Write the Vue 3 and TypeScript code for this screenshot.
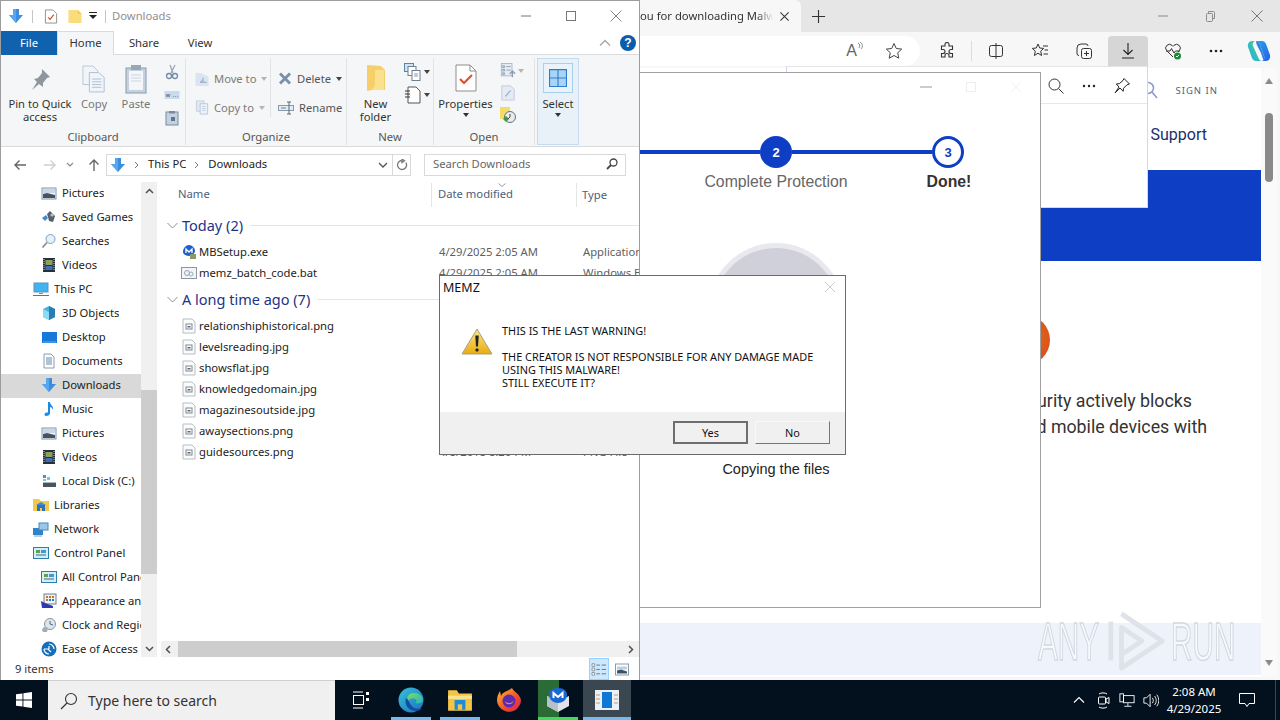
<script setup lang="ts">
const ic: Record<string, string> = {
  down: '<path d="M5 1h6v6h4l-7 8-7-8h4z" fill="#3a8ee0"/><path d="M5 1h3v14l-7-8h4z" fill="#5aa6ec"/>',
  pics: '<rect x="1" y="3" width="14" height="11" fill="#f4f6f8" stroke="#7e93ab"/><path d="M2 4h12v4H2z" fill="#c6d8ea"/><path d="M2 13V9l4-1 8 2v3z" fill="#48525e"/>',
  games: '<path d="M1 9l4-3 2 3-3 3z" fill="#4a87c8"/><path d="M6 5l3-3 5 5-2 6-4-1-1-4z" fill="#55606c"/><circle cx="11" cy="6" r="1.6" fill="#b9c4cf"/>',
  search: '<circle cx="9.500" cy="6" r="4.500" fill="#e4f1fa" stroke="#7ea2bf"/><path d="M6 9.500l-4.500 5" stroke="#8a8f95" stroke-width="1.800"/>',
  video: '<rect x="2" y="1" width="12" height="14" fill="#26303c"/><rect x="4.500" y="3" width="7" height="5" fill="#8fa05a"/><rect x="4.500" y="9" width="7" height="4" fill="#3f6fb0"/><path d="M3 2v12M13 2v12" stroke="#c8d0d8" stroke-dasharray="1 1"/>',
  pc: '<rect x="1" y="2" width="14" height="9" fill="#3fb4ee" stroke="#5b93bd"/><path d="M6 12h4v1H6z" fill="#77909f"/><path d="M0 14h16v1H0z" fill="#3e7fb0"/>',
  obj: '<path d="M8 1l6 3v8l-6 3-6-3V4z" fill="#45b4e0"/><path d="M8 1l6 3v8l-6 3z" fill="#2a7cb5"/><path d="M2 4l6 3v8l-6-3z" fill="#8bdbf2"/>',
  desk: '<rect x="1" y="3" width="15" height="11" fill="#1678d8"/><path d="M2 13h13" stroke="#65b4f2"/>',
  docs: '<path d="M3 1h7l3 3v11H3z" fill="#fff" stroke="#8b9aa8"/><path d="M5 5h6M5 7h6M5 9h6M5 11h6" stroke="#5d87ad"/>',
  music: '<path d="M7 1h2c0 3 4 4 3 8-.5-2-2-3-3-3v6c0 2-2 3-4 3-2-.3-2-3 .5-3.500.6-.1 1.500 0 1.500.3z" fill="#1d8ae0"/>',
  disk: '<rect x="2" y="9" width="13" height="5" fill="#4b5560"/><path d="M2 9h13v1H2z" fill="#aeb8c2"/><rect x="2" y="2" width="3" height="3" fill="#2aa0e0"/><rect x="6" y="4" width="3" height="3" fill="#75c5ef"/><rect x="2" y="6" width="3" height="2" fill="#75c5ef"/>',
  libs: '<path d="M0 2h6l2 2h8v10H0z" fill="#f2c84c"/><path d="M4 8h8v6H4z" fill="#2f73bd"/><path d="M3 8l5-3 5 3z" fill="#3f8cd8"/><rect x="7" y="11" width="2" height="3" fill="#f2c84c"/>',
  net: '<rect x="0" y="7" width="10" height="7" fill="#2f83c8"/><rect x="6" y="2" width="9" height="7" fill="#9ac8ea" stroke="#4687b8"/><path d="M1 15h8" stroke="#7aa0bd"/>',
  cp: '<rect x="0.500" y="2.500" width="15" height="11" fill="#d5edf7" stroke="#2f7fae"/><rect x="3" y="5" width="4" height="3" fill="#5aa44f"/><rect x="8" y="5" width="5" height="3" fill="#3f9acb"/><rect x="3" y="9" width="10" height="2" fill="#90a8bb"/>',
  app: '<rect x="3" y="1" width="12" height="10" fill="#eef0f2" stroke="#6d7f92"/><path d="M5 3h2v2H5zM8 3h2v2H8zM11 3h2v2h-2zM5 6h2v2H5z" fill="#c2772e"/><path d="M8 6h2v2H8zM11 6h2v2h-2z" fill="#2f7fc0"/><path d="M0 8l4 2 8 3v2H1z" fill="#2e38b0"/>',
  clock: '<circle cx="9" cy="7" r="5.500" fill="#dfe6ea" stroke="#8797a3"/><path d="M9 4v3l3 1" stroke="#3f6f98" fill="none"/><path d="M1 13c1-4 4-3 6-2l-1 4H2z" fill="#a6adb3"/>',
  ease: '<circle cx="8" cy="8" r="7.500" fill="#176fb8"/><path d="M8 3a5 5 0 0 1 5 5M3 8a5 5 0 0 0 5 5M3 8h4l3 3M8 5v3" stroke="#fff" fill="none" stroke-width="1.200"/>',
  exe: '<path d="M2 8c0-4 3-7 6-7s6 3 6 6c0 2-3 5-6 5S2 10 2 8z" fill="#1d5fd0"/><path d="M5 9V5l3 3 3-3v4" stroke="#fff" fill="none" stroke-width="1.300"/><rect x="9" y="10" width="6" height="5" fill="#8b9a62"/>',
  bat: '<rect x="0.500" y="2.500" width="15" height="11" fill="#f3f4f5" stroke="#8b97a3"/><circle cx="6" cy="8" r="2.500" fill="none" stroke="#8fa4b8"/><circle cx="10" cy="9" r="2" fill="none" stroke="#a0adb9"/>',
  img: '<path d="M2 1h9l3 3v11H2z" fill="#fbfbfb" stroke="#b8bec4"/><rect x="5" y="6" width="6" height="5" fill="#fff" stroke="#7b8793"/><rect x="6.500" y="8" width="3" height="1.500" fill="#5b6672"/>',
}

interface NavRow { label: string; icon: string; top?: boolean; sel?: boolean }
const navRows: NavRow[] = [
  { label: 'Pictures', icon: 'pics' },
  { label: 'Saved Games', icon: 'games' },
  { label: 'Searches', icon: 'search' },
  { label: 'Videos', icon: 'video' },
  { label: 'This PC', icon: 'pc', top: true },
  { label: '3D Objects', icon: 'obj' },
  { label: 'Desktop', icon: 'desk' },
  { label: 'Documents', icon: 'docs' },
  { label: 'Downloads', icon: 'down', sel: true },
  { label: 'Music', icon: 'music' },
  { label: 'Pictures', icon: 'pics' },
  { label: 'Videos', icon: 'video' },
  { label: 'Local Disk (C:)', icon: 'disk' },
  { label: 'Libraries', icon: 'libs', top: true },
  { label: 'Network', icon: 'net', top: true },
  { label: 'Control Panel', icon: 'cp', top: true },
  { label: 'All Control Panel Items', icon: 'cp' },
  { label: 'Appearance and Personalization', icon: 'app' },
  { label: 'Clock and Region', icon: 'clock' },
  { label: 'Ease of Access', icon: 'ease' },
]

interface FileRow { name: string; date: string; type: string; icon: string }
const today: FileRow[] = [
  { name: 'MBSetup.exe', date: '4/29/2025 2:05 AM', type: 'Application', icon: 'exe' },
  { name: 'memz_batch_code.bat', date: '4/29/2025 2:05 AM', type: 'Windows Batch File', icon: 'bat' },
]
const old: FileRow[] = [
  { name: 'relationshiphistorical.png', date: '', type: '', icon: 'img' },
  { name: 'levelsreading.jpg', date: '', type: '', icon: 'img' },
  { name: 'showsflat.jpg', date: '', type: '', icon: 'img' },
  { name: 'knowledgedomain.jpg', date: '', type: '', icon: 'img' },
  { name: 'magazinesoutside.jpg', date: '', type: '', icon: 'img' },
  { name: 'awaysections.png', date: '', type: '', icon: 'img' },
  { name: 'guidesources.png', date: '4/8/2018 8:20 PM', type: 'PNG File', icon: 'img' },
]
const groups = [
  { title: 'Today (2)', files: today },
  { title: 'A long time ago (7)', files: old },
]
</script>

<template>
  <div class="desktop">
    <!-- browser -->
    <section class="browser">
      <div class="tabstrip">
        <div class="tab">
          <span class="tabtext">ou for downloading Malw</span>
          <svg class="i12" viewBox="0 0 12 12"><path d="M1.500 1.500l9 9M10.500 1.500l-9 9" stroke="#333" fill="none" stroke-width="1.100"/></svg>
        </div>
        <svg class="newtab" viewBox="0 0 16 16"><path d="M8 1v14M1 8h14" stroke="#333" fill="none" stroke-width="1.200"/></svg>
        <div class="wincontrols">
          <svg class="i12" viewBox="0 0 12 12"><path d="M1 6h10" stroke="#8a8a8a"/></svg>
          <svg class="i12" viewBox="0 0 12 12"><rect x="2.500" y="3.500" width="6" height="8" rx="1" fill="none" stroke="#8a8a8a"/><path d="M4.500 3.500v-2h5a1 1 0 0 1 1 1v6h-2" fill="none" stroke="#8a8a8a"/></svg>
          <svg class="i12" viewBox="0 0 12 12"><path d="M.5.5l11 11M11.500.5l-11 11" stroke="#777" fill="none"/></svg>
        </div>
      </div>
      <div class="toolbar">
        <div class="pill">
          <span class="readaloud">A<svg class="waves" viewBox="0 0 6 8"><path d="M1 1c2 1 2 3 1 5M3 0c3 2 3 5 1 7" stroke="#666" fill="none" stroke-width=".8"/></svg></span>
          <svg class="i18 star" viewBox="0 0 18 18"><path d="M9 1.500l2.300 5 5.400.6-4 3.700 1.100 5.400L9 13.500l-4.800 2.700 1.100-5.400-4-3.700 5.400-.6z" fill="none" stroke="#444"/></svg>
        </div>
        <svg class="i18 tb1" viewBox="0 0 18 18"><path d="M7 2.500a2 2 0 0 1 4 0V4h3.500v3.500H13a2 2 0 0 0 0 4h1.500V15H11v-1.500a2 2 0 0 0-4 0V15H3.500v-3.500H5a2 2 0 0 0 0-4H3.500V4H7z" fill="none" stroke="#333" stroke-width="1.100"/></svg>
        <span class="tbsep"></span>
        <svg class="i18 tb2" viewBox="0 0 18 18"><rect x="2.500" y="3.500" width="13" height="11" rx="2" fill="none" stroke="#333"/><path d="M9 1v16" stroke="#333"/></svg>
        <svg class="i18 tb3" viewBox="0 0 18 18"><path d="M7 2l1.700 4 4 .4-3 2.800.9 4.300L7 11.200l-3.600 2.300.9-4.300-3-2.800 4-.4z" fill="none" stroke="#333"/><path d="M12 4h5M13.500 8H17M12.500 12H17" stroke="#333"/></svg>
        <svg class="i18 tb4" viewBox="0 0 18 18"><rect x="6.500" y="6.500" width="10" height="10" rx="2" fill="none" stroke="#333"/><path d="M11.500 9v5M9 11.500h5M4 13.500A2 2 0 0 1 2 12V6a4 4 0 0 1 4-4h5a2 2 0 0 1 2 2" fill="none" stroke="#333"/></svg>
        <div class="dlbtn"><svg class="i18" viewBox="0 0 18 18"><path d="M9 1v11M4.500 8L9 12.500 13.500 8M3 16h12" fill="none" stroke="#222" stroke-width="1.100"/></svg></div>
        <svg class="i18 tb5" viewBox="0 0 18 18"><path d="M9 15L2.500 8.500a3.800 3.800 0 0 1 5.500-5.200l1 1 1-1a3.800 3.800 0 0 1 5.500 5.200L14 10" fill="none" stroke="#333"/><path d="M2 9h4l1.500-2.500L10 11l1.500-2H16" fill="none" stroke="#333"/><circle cx="13.500" cy="14" r="3.500" fill="#1d8a3c"/><path d="M12 14l1 1 2-2" stroke="#fff" fill="none"/></svg>
        <svg class="i18 tb6" viewBox="0 0 18 18"><circle cx="4" cy="9" r="1.300" fill="#222"/><circle cx="9" cy="9" r="1.300" fill="#222"/><circle cx="14" cy="9" r="1.300" fill="#222"/></svg>
        <svg class="copilot" viewBox="0 0 24 24">
          <defs>
            <linearGradient id="cpa" x1="0" y1="0" x2="1" y2="1"><stop offset="0" stop-color="#1fa8e8"/><stop offset="1" stop-color="#2a5fe8"/></linearGradient>
            <linearGradient id="cpb" x1="0" y1="1" x2="1" y2="0"><stop offset="0" stop-color="#1fb0e0"/><stop offset="1" stop-color="#4fd08a"/></linearGradient>
          </defs>
          <path d="M9 2h6c2 0 3 1 4 3l4 11c.7 3-1 6-4 6h-5c2 0 4-2 3-5L13 6c-.7-2-2-4-4-4z" fill="url(#cpa)"/>
          <path d="M15 22H9c-2 0-3-1-4-3L1 8c-.7-3 1-6 4-6h4C7 2 5 4 6 7l5 11c.7 2 2 4 4 4z" fill="url(#cpb)"/>
          <path d="M9 2c2 0 3.300 2 4 4l4 11c.6 1.700.2 3-.7 4L14 14 9.500 5z" fill="#2f7fe6"/>
        </svg>
      </div>
      <div class="viewport">
        <div class="page">
          <div class="pagehead">
            <svg class="i18 searchblue" viewBox="0 0 18 18"><circle cx="7" cy="7" r="5.500" fill="none" stroke="#8b97c9" stroke-width="1.500"/><path d="M11 11l5 6" stroke="#8b97c9" stroke-width="1.500"/></svg>
            <span class="signin">SIGN IN</span>
          </div>
          <div class="support">Support</div>
          <div class="blueband"></div>
          <div class="orange"></div>
          <p class="lede">curity actively blocks</p>
          <p class="lede second">and mobile devices with</p>
          <div class="paleband"></div>
        </div>
        <div class="pagescroll">
          <span class="tri-up"></span>
          <span class="pagethumb"></span>
          <span class="tri-down"></span>
        </div>
      </div>
      <div class="dlpanel">
        <div class="dlhead">
          <svg class="i18" viewBox="0 0 18 18"><circle cx="7.500" cy="7.500" r="5.500" fill="none" stroke="#333"/><path d="M11.500 11.500l5 5" stroke="#333"/></svg>
          <svg class="i18" viewBox="0 0 18 18"><circle cx="4" cy="9" r="1.200" fill="#222"/><circle cx="9" cy="9" r="1.200" fill="#222"/><circle cx="14" cy="9" r="1.200" fill="#222"/></svg>
          <svg class="i18" viewBox="0 0 18 18"><path d="M11 1.500l5.500 5.500-2.500.8-3.500 3.500-.3 3L7 11l-5 5 4-6-2.700-3 3-.3L10 3.500z" fill="none" stroke="#222"/></svg>
        </div>
      </div>
    </section>

    <!-- installer -->
    <section class="installer">
      <div class="instbar">
        <svg class="i12" viewBox="0 0 12 12"><path d="M0 6h12" stroke="#999"/></svg>
        <svg class="i12" viewBox="0 0 12 12"><rect x="1.500" y="1.500" width="9" height="9" fill="none" stroke="#eee"/></svg>
        <svg class="i12" viewBox="0 0 12 12"><path d="M1 1l10 10M11 1L1 11" stroke="#f0f0f0"/></svg>
      </div>
      <div class="track">
        <span class="dot filled"></span><span class="line"></span>
        <span class="dot filled">2</span><span class="line"></span>
        <span class="dot ring">3</span>
      </div>
      <div class="steplabels">
        <span></span><span>Complete Protection</span><b>Done!</b>
      </div>
      <div class="disc"><div class="discin"></div></div>
      <div class="copying">Copying the files</div>
    </section>

    <div class="watermark">
      <span class="wmtext">ANY</span>
      <svg class="wmplay" viewBox="0 0 64 64"><path d="M5 12v40" fill="none" stroke="#dfe2e9" stroke-width="5"/><path d="M16 4l42 28-42 28V18l21 14-21 14" fill="none" stroke="#dfe2e9" stroke-width="5" stroke-linejoin="round"/></svg>
      <span class="wmtext">RUN</span>
    </div>

    <!-- explorer -->
    <section class="explorer">
      <header class="titlebar">
        <svg class="i16 qat1" viewBox="0 0 16 16" v-html="ic.down"></svg>
        <span class="qsep"></span>
        <svg class="i14 qat2" viewBox="0 0 14 16"><path d="M1 1h8l4 4v10H1z" fill="#fff" stroke="#8e8e8e"/><path d="M4 9l2 2 4-5" fill="none" stroke="#d2502a" stroke-width="1.300"/></svg>
        <svg class="i14 qat3" viewBox="0 0 14 16"><path d="M0 1h10l4 4v10H0z" fill="#fbdc7c"/><path d="M10 1l4 4h-4z" fill="#eec65a"/></svg>
        <svg class="qat4" viewBox="0 0 8 8"><path d="M0 0h8v1H0zM0 3h8L4 7z" fill="#222"/></svg>
        <span class="qsep second"></span>
        <span class="wintitle">Downloads</span>
        <div class="expcontrols">
          <svg class="i12" viewBox="0 0 12 12"><path d="M1 6h10" stroke="#777"/></svg>
          <svg class="i12" viewBox="0 0 12 12"><rect x="1.500" y="1.500" width="9" height="9" fill="none" stroke="#777"/></svg>
          <svg class="i12" viewBox="0 0 12 12"><path d="M.5.500l11 11M11.500.5l-11 11" fill="none" stroke="#888"/></svg>
        </div>
      </header>
      <nav class="ribbontabs">
        <span class="rtab file">File</span>
        <span class="rtab home">Home</span>
        <span class="rtab share">Share</span>
        <span class="rtab view">View</span>
        <svg class="ribbonup" viewBox="0 0 12 8"><path d="M1 6.500L6 1.500l5 5" fill="none" stroke="#a5a5a5" stroke-width="1.300"/></svg>
        <span class="helpdot">?</span>
      </nav>

      <div class="ribbon">
        <div class="rgroup clip">
          <div class="rcontent">
            <div class="big pin">
              <svg class="bigicon" viewBox="0 0 24 24"><path d="M14 2l8 8-3 1-4 5 0 4-4-3-7 6 5-8-3-3 4-1 4-5z" fill="#8f969d"/></svg>
              <span>Pin to Quick<br />access</span>
            </div>
            <div class="big muted copy">
              <svg class="bigicon" viewBox="0 0 26 30"><path d="M1 1h11l5 5v15H1z" fill="#f1f4f9" stroke="#b6c4d6"/><path d="M8 8h10l6 5v16H8z" fill="#f1f4f9" stroke="#a9bdd4"/><path d="M11 15h10M11 18h10M11 21h10M11 24h10" stroke="#a9bdd4"/></svg>
              <span>Copy</span>
            </div>
            <div class="big muted paste">
              <svg class="bigicon tall" viewBox="0 0 24 30"><rect x="2" y="4" width="20" height="25" fill="#c4d1e0" stroke="#8c9aaa"/><rect x="5" y="7" width="14" height="19" fill="#f4f6f9"/><rect x="7" y="1" width="10" height="5" fill="#9aa6b4"/><path d="M7 11h10M7 14h10M7 17h10" stroke="#ccd6e2"/></svg>
              <span>Paste</span>
            </div>
            <div class="smallcol clipcol">
              <svg class="i16" viewBox="0 0 16 16"><path d="M6 1l3 8M11 1L7 9" stroke="#9aa7b4" fill="none" stroke-width="1.300"/><circle cx="5" cy="12" r="2.500" fill="none" stroke="#7289a4" stroke-width="1.300"/><circle cx="11" cy="12" r="2.500" fill="none" stroke="#7289a4" stroke-width="1.300"/></svg>
              <svg class="i16" viewBox="0 0 16 16"><rect x="0.500" y="4" width="15" height="8" fill="#cad9ec"/><path d="M2 7l1 3 1-3 1 3 1-3M9 9.500h.8M11 9.500h.8M13 9.500h.8" stroke="#5a6f88" fill="none" stroke-width=".7"/></svg>
              <svg class="i16" viewBox="0 0 16 16"><rect x="2" y="2" width="12" height="13" fill="#c4d1e0" stroke="#7b8b9d"/><rect x="5" y="1" width="6" height="2.500" fill="#7b8b9d"/><path d="M7 7h4v4H7z" fill="#5f7690"/></svg>
            </div>
          </div>
          <span class="rlabel">Clipboard</span>
        </div>
        <div class="rgroup org">
          <div class="rcontent">
            <div class="rows muted orgcol1">
              <div class="rowbtn">
                <svg class="i14" viewBox="0 0 14 16"><path d="M0 2h6l8 4v10H0z" fill="#dbe5f1"/><path d="M8 7v5H5l3-2.500M8 12h4" stroke="#91a4bb" fill="none"/></svg>
                <span>Move to</span><i class="caret faint"></i>
              </div>
              <div class="rowbtn">
                <svg class="i14" viewBox="0 0 14 16"><path d="M1 1h8v11H1z" fill="#e2e9f3" stroke="#c2cfdf"/><path d="M5 4h8v11H5z" fill="#eef3f9" stroke="#b8c7da"/><path d="M7 7h4M7 9h4M7 11h4" stroke="#c2cfdf"/></svg>
                <span>Copy to</span><i class="caret faint"></i>
              </div>
            </div>
            <div class="rows orgcol2">
              <div class="rowbtn">
                <svg class="i14" viewBox="0 0 14 14"><path d="M1 3l2-2 4 4 4-4 2 2-4 4 4 4-2 2-4-4-4 4-2-2 4-4z" fill="#7a90a8"/></svg>
                <span>Delete</span><i class="caret"></i>
              </div>
              <div class="rowbtn">
                <svg class="i14 wide" viewBox="0 0 16 14"><rect x="0.500" y="4.500" width="15" height="5" fill="#e6ebf2" stroke="#8a9aaa"/><path d="M3 7h5" stroke="#6c7e90"/><path d="M9 1h4M11 1v12M9 13h4" stroke="#55687a" fill="none"/></svg>
                <span>Rename</span>
              </div>
            </div>
          </div>
          <span class="rlabel">Organize</span>
        </div>
        <div class="rgroup newg">
          <div class="rcontent">
            <div class="big newf">
              <svg class="bigicon folder" viewBox="0 0 20 28"><path d="M1 1l14 1 4 4v20L6 26l-5 1z" fill="#f5cf6a"/><path d="M9 6h9v20H6c1-3 3-3 3-6z" fill="#fbe08f"/></svg>
              <span>New<br />folder</span>
            </div>
            <div class="smallcol newcol">
              <span class="withcaret">
                <svg class="i16 med" viewBox="0 0 18 18"><rect x="0.500" y="0.500" width="9" height="8" fill="#cfe3f6" stroke="#5a84a8"/><rect x="4" y="3.500" width="8" height="9" fill="#fff" stroke="#6d7f90"/><rect x="8" y="7.500" width="8" height="10" fill="#fff" stroke="#6d7f90"/><path d="M10 11h4M10 13h4" stroke="#8a99a8"/></svg>
                <i class="caret"></i>
              </span>
              <span class="withcaret">
                <svg class="i16 med" viewBox="0 0 18 18"><path d="M4 1h8l4 4v12H4z" fill="#fff" stroke="#555"/><path d="M1 5h5M1 8h5M1 11h5" stroke="#333"/></svg>
                <i class="caret"></i>
              </span>
            </div>
          </div>
          <span class="rlabel">New</span>
        </div>
        <div class="rgroup openg">
          <div class="rcontent">
            <div class="big props">
              <svg class="bigicon check" viewBox="0 0 22 28"><path d="M1 1h14l6 6v20H1z" fill="#fff" stroke="#8d8d8d"/><path d="M15 1v6h6" fill="none" stroke="#8d8d8d"/><path d="M5 15l4 4 8-8" fill="none" stroke="#d9572d" stroke-width="2.200"/></svg>
              <span>Properties</span>
              <i class="caret dark"></i>
            </div>
            <div class="smallcol opencol">
              <span class="withcaret">
                <svg class="i16" viewBox="0 0 16 18"><rect x="0.500" y="0.500" width="12" height="14" fill="#e6ecf4" stroke="#a8b6c6"/><path d="M2 3h2v2H2zM2 7h2v2H2zM2 11h2v2H2zM6 4h5M6 8h5" stroke="#8d9cab" fill="none"/><path d="M13 9v7M10 12l3-3 3 3" stroke="#8ba0b5" fill="none" stroke-width="1.500"/></svg>
                <i class="caret faint"></i>
              </span>
              <svg class="i16" viewBox="0 0 16 18"><path d="M1 1h10l4 4v12H1z" fill="#e4ebf4" stroke="#bcc9d9"/><path d="M5 13l6-7" stroke="#a5b5c8" stroke-width="1.500"/></svg>
              <svg class="i16" viewBox="0 0 16 16"><rect x="0" y="0" width="10" height="12" fill="#f4dc6c"/><circle cx="10" cy="10" r="5.500" fill="#e8ecef" stroke="#65717c"/><path d="M3 12l3-3 3 3-3 3z" fill="#3f9a3c"/><path d="M10 7v3l-2 2" stroke="#444" fill="none"/></svg>
            </div>
          </div>
          <span class="rlabel">Open</span>
        </div>
        <div class="rgroup selg">
          <div class="selicon">
            <svg class="i18" viewBox="0 0 16 16"><rect width="16" height="16" fill="#2e7cd0"/><path d="M1 1h6.500v6.500H1zM8.500 1H15v6.500H8.500zM1 8.500h6.500V15H1zM8.500 8.500H15V15H8.500z" fill="#a9d5f5"/></svg>
          </div>
          <span class="sellabel">Select</span>
          <i class="caret dark"></i>
        </div>
      </div>

      <div class="addressbar">
        <svg class="navarrow back" viewBox="0 0 14 12"><path d="M13 6H2M6.500 1.500L2 6l4.500 4.500" fill="none" stroke="#666" stroke-width="1.400"/></svg>
        <svg class="navarrow fwd" viewBox="0 0 14 12"><path d="M1 6h11M7.500 1.500L12 6l-4.500 4.500" fill="none" stroke="#cfcfcf" stroke-width="1.400"/></svg>
        <svg class="navcaret" viewBox="0 0 8 5"><path d="M1 1l3 3 3-3" fill="none" stroke="#8a8a8a" stroke-width="1.200"/></svg>
        <svg class="navarrow up" viewBox="0 0 12 14"><path d="M6 13V2M1.500 6.500L6 2l4.500 4.500" fill="none" stroke="#666" stroke-width="1.400"/></svg>
        <div class="addrbox">
          <svg class="i16" viewBox="0 0 16 16" v-html="ic.down"></svg>
          <svg class="crumb" viewBox="0 0 5 8"><path d="M1 1l3 3-3 3" fill="none" stroke="#777"/></svg>
          <span class="crumbtext">This PC</span>
          <svg class="crumb" viewBox="0 0 5 8"><path d="M1 1l3 3-3 3" fill="none" stroke="#777"/></svg>
          <span class="crumbtext">Downloads</span>
          <svg class="addrcaret" viewBox="0 0 10 6"><path d="M1 1l4 4 4-4" fill="none" stroke="#555" stroke-width="1.300"/></svg>
          <span class="refresh">
            <svg class="i12" viewBox="0 0 12 12"><path d="M9.800 3.500A4.500 4.500 0 1 1 6 1.500M6 0v3.500l2.500-1.700z" fill="none" stroke="#777" stroke-width="1.300"/></svg>
          </span>
        </div>
        <div class="searchbox">
          <span>Search Downloads</span>
          <svg class="i12" viewBox="0 0 12 12"><circle cx="7.500" cy="4.500" r="3.500" fill="none" stroke="#444" stroke-width="1.300"/><path d="M5 7l-4 4" stroke="#444" stroke-width="1.800"/></svg>
        </div>
      </div>

      <div class="explbody">
        <aside class="navpane">
          <div class="navlist">
            <div v-for="(r, idx) in navRows" :key="idx" class="navrow" :class="{ top: r.top, sel: r.sel }">
              <svg class="i16" viewBox="0 0 16 16" v-html="ic[r.icon]"></svg>
              <span class="navlabel">{{ r.label }}</span>
            </div>
          </div>
          <div class="vscroll">
            <svg class="sarrow" viewBox="0 0 9 6"><path d="M1 5l3.500-3.500L8 5" fill="none" stroke="#505050" stroke-width="1.500"/></svg>
            <span class="vspace"></span>
            <span class="vthumb"></span>
            <span class="vspace end"></span>
            <svg class="sarrow" viewBox="0 0 9 6"><path d="M1 1l3.500 3.500L8 1" fill="none" stroke="#505050" stroke-width="1.500"/></svg>
          </div>
        </aside>
        <div class="filepane">
          <div class="colhead">
            <span class="c-name">Name</span>
            <span class="c-date">Date modified<svg class="sortcaret" viewBox="0 0 8 4"><path d="M.5.5L4 3.500 7.500.5" fill="none" stroke="#999"/></svg></span>
            <span class="c-type">Type</span>
          </div>
          <div class="filelist">
            <template v-for="g in groups" :key="g.title">
              <div class="grouphead">
                <svg class="groupchev" viewBox="0 0 11 7"><path d="M.5 1L5.500 6l5-5" fill="none" stroke="#8a9099"/></svg>
                <span class="gtitle">{{ g.title }}</span>
                <span class="gline"></span>
              </div>
              <div v-for="f in g.files" :key="f.name" class="filerow">
                <svg class="i16 ficon" viewBox="0 0 16 16" v-html="ic[f.icon]"></svg>
                <span class="fname">{{ f.name }}</span>
                <span class="fdate">{{ f.date }}</span>
                <span class="ftype">{{ f.type }}</span>
              </div>
            </template>
          </div>
          <div class="hscroll">
            <svg class="harrow" viewBox="0 0 6 9"><path d="M5 1L1.500 4.500 5 8" fill="none" stroke="#505050" stroke-width="1.500"/></svg>
            <span class="hthumb"></span>
            <svg class="harrow" viewBox="0 0 6 9"><path d="M1 1l3.500 3.500L1 8" fill="none" stroke="#505050" stroke-width="1.500"/></svg>
          </div>
        </div>
      </div>

      <footer class="statusbar">
        <span class="count">9 items</span>
        <span class="viewbtn on">
          <svg viewBox="0 0 18 16" class="i16 vb"><path d="M1 2h3v3H1zM1 7h3v3H1zM1 12h3v3H1z" fill="#fff" stroke="#6a7782" stroke-width=".8"/><path d="M6 3.500h4M12 3.500h5M6 8.500h4M12 8.500h5M6 13.500h4M12 13.500h5" stroke="#5e6a75"/></svg>
        </span>
        <span class="viewbtn">
          <svg viewBox="0 0 14 12" class="i14"><rect x="0.500" y="0.500" width="13" height="11" fill="#fff" stroke="#8b9aa6"/><path d="M2 3h10v3H2z" fill="#b8d0e4"/><path d="M2 10V7l4-1 6 2v2z" fill="#3f5366"/></svg>
        </span>
      </footer>
    </section>

    <!-- message box -->
    <section class="dialog">
      <div class="dlgtitle">
        <span>MEMZ</span>
        <svg class="i12" viewBox="0 0 12 12"><path d="M1 1l10 10M11 1L1 11" fill="none" stroke="#ccc"/></svg>
      </div>
      <div class="dlgbody">
        <svg class="warn" viewBox="0 0 32 28">
          <defs><linearGradient id="wy" x1="0" y1="0" x2="0" y2="1"><stop offset="0" stop-color="#fbe68a"/><stop offset="1" stop-color="#e8ac10"/></linearGradient></defs>
          <path d="M16 1.500L31 26.500H1z" fill="url(#wy)" stroke="#a9a17f" stroke-linejoin="round"/>
          <path d="M14.300 8h3.400l-.7 11h-2z" fill="#222"/><rect x="14.500" y="21" width="3" height="3" rx="1" fill="#222"/>
        </svg>
        <div class="dlgtext">
          <p>THIS IS THE LAST WARNING!</p>
          <p class="gap">THE CREATOR IS NOT RESPONSIBLE FOR ANY DAMAGE MADE</p>
          <p>USING THIS MALWARE!</p>
          <p>STILL EXECUTE IT?</p>
        </div>
      </div>
      <div class="dlgfoot">
        <button class="dbtn default" type="button">Yes</button>
        <button class="dbtn" type="button">No</button>
      </div>
    </section>

    <!-- taskbar -->
    <footer class="taskbar">
      <div class="startbtn">
        <svg viewBox="0 0 16 16" class="i16"><path d="M0 2.300l6.500-.9v6.200H0zM7.400 1.300L16 0v7.600H7.400zM0 8.400h6.500v6.200L0 13.700zM7.400 8.400H16V16l-8.600-1.200z" fill="#fff"/></svg>
      </div>
      <div class="tasksearch">
        <svg class="i18" viewBox="0 0 18 18"><circle cx="11" cy="7" r="5.500" fill="none" stroke="#333" stroke-width="1.100"/><path d="M7 11l-6 6" stroke="#333" stroke-width="1.200"/></svg>
        <span>Type here to search</span>
      </div>
      <div class="tbtn taskview">
        <svg class="i18" viewBox="0 0 18 18"><path d="M1 1h10M1 17h10" stroke="#fff"/><rect x="1.500" y="4.500" width="10" height="9" fill="none" stroke="#fff"/><path d="M14 1h3v3h-3zM14 7h3v3h-3z" fill="#fff"/></svg>
      </div>
      <div class="tbtn under">
        <svg class="tbicon" viewBox="0 0 26 26">
          <defs>
            <linearGradient id="eg" x1="0" y1="0" x2="1" y2="1"><stop offset="0" stop-color="#35c1d8"/><stop offset="1" stop-color="#1f6fc0"/></linearGradient>
            <linearGradient id="eg2" x1="0" y1="0" x2="1" y2="1"><stop offset="0" stop-color="#80dc5a"/><stop offset="1" stop-color="#1fb6c8"/></linearGradient>
          </defs>
          <circle cx="13" cy="13" r="12.500" fill="url(#eg)"/>
          <path d="M25 14c0-5-4-8-9-8-6 0-8 5-6 8 1-2 4-3 7-2 3 .8 1 4 0 4 4 1 7 0 8-2z" fill="url(#eg2)"/>
          <path d="M8 11c-2 6 2 13 10 13 3 0 4-1 6-3-5 2-9 0-11-3-2-3-3-6-5-7z" fill="#0f4fa0"/>
        </svg>
      </div>
      <div class="tbtn under">
        <svg class="tbicon" viewBox="0 0 24 24"><path d="M1 3h8l2 3h12v16H1z" fill="#f3c545"/><path d="M1 8h22v3H1z" fill="#fbe28d"/><path d="M7 12h10v9H7z" fill="#1c8bd9"/><path d="M10 16h4v5h-4z" fill="#f3c545"/></svg>
      </div>
      <div class="tbtn ff">
        <svg class="tbicon" viewBox="0 0 26 26">
          <defs><linearGradient id="fx" x1="0" y1="0" x2="1" y2="1"><stop offset="0" stop-color="#ffc12a"/><stop offset=".6" stop-color="#f24a28"/><stop offset="1" stop-color="#c9206a"/></linearGradient></defs>
          <path d="M16 1c2 4 8 6 9 12a12 12 0 1 1-23-5l2-4 1 5c2-5 8-5 11-8z" fill="url(#fx)"/>
          <circle cx="13" cy="14" r="6.500" fill="#5b2bb3"/><path d="M9 14c2 3 7 3 9-1-1 5-8 6-9 1z" fill="#ff9a3c"/>
        </svg>
      </div>
      <div class="tbtn mb">
        <span class="mbfill"></span>
        <svg class="tbicon" viewBox="0 0 26 26"><path d="M13 14l11-5v10l-11 6-11-6V9z" fill="#dfe4e8"/><path d="M13 14v11l-11-6V9z" fill="#b9c1c8"/><path d="M13 1c6 0 9 3 9 7 0 5-5 8-9 8s-9-3-9-8c0-4 3-7 9-7z" fill="#1a68d4"/><path d="M8.500 11V6l4.500 4 4.500-4v5" fill="none" stroke="#fff" stroke-width="2"/></svg>
      </div>
      <div class="tbtn active">
        <svg class="tbicon small" viewBox="0 0 24 20"><rect width="24" height="20" fill="#eaf2f8"/><rect x="7" y="2" width="10" height="16" fill="#0f78d4"/><path d="M1 5h4M1 9h4M1 13h4M19 5h4M19 9h4M19 13h4" stroke="#c49a6a"/></svg>
      </div>
      <div class="tray">
        <svg class="trayicon chev" viewBox="0 0 12 8"><path d="M1 6.500l5-5 5 5" fill="none" stroke="#fff" stroke-width="1.100"/></svg>
        <svg class="trayicon" viewBox="0 0 14 18"><rect x="1.500" y="6" width="7" height="7" rx="1" fill="none" stroke="#fff"/><path d="M9 8l3-1.500v6L9 11zM2 3c2-1.500 6-1.500 8 0M2 16c2 1.500 6 1.500 8 0" fill="none" stroke="#fff"/></svg>
        <svg class="trayicon net" viewBox="0 0 18 16"><rect x="1" y=".5" width="4" height="9" fill="none" stroke="#fff"/><rect x="5" y="2.500" width="12" height="8" fill="none" stroke="#fff"/><path d="M10 11v3M6 14.500h8" stroke="#fff"/></svg>
        <svg class="trayicon vol" viewBox="0 0 18 16"><path d="M1 5h3l4-4v14l-4-4H1z" fill="none" stroke="#fff"/><path d="M10.500 5c1.500 2 1.500 4 0 6M13 3c2.500 3 2.500 7 0 10M15.500 1.500c3 4 3 9 0 13" fill="none" stroke="#fff"/></svg>
        <div class="clock"><span>2:08 AM</span><span>4/29/2025</span></div>
        <svg class="notif" viewBox="0 0 16 16"><path d="M.5 1.500h15v10H10L8 14.500 6 11.500H.5z" fill="none" stroke="#fff"/></svg>
        <span class="showdesk"></span>
      </div>
    </footer>
  </div>
</template>

<style>
html, body { margin: 0; padding: 0; background: #fff; }
</style>

<style scoped>
* { box-sizing: border-box; }
p { margin: 0; }
i { display: inline-block; font-style: normal; }
svg { display: block; flex: none; }
.i12 { width: 12px; height: 12px; }
.i14 { width: 14px; height: 15px; }
.i14.wide { width: 16px; height: 14px; }
.i16 { width: 16px; height: 16px; }
.i18 { width: 18px; height: 18px; }

.desktop {
  position: relative; width: 1280px; height: 720px; overflow: hidden; background: #fff;
  font-family: "Noto Sans", "Open Sans", sans-serif; font-size: 11.250px; color: #1a1a1a;
}

/* browser */
.browser { position: absolute; left: 640px; top: 0; width: 640px; height: 680px; background: #f7f7f7; display: flex; flex-direction: column; }
.tabstrip { height: 32px; background: #e6e6e6; display: flex; align-items: center; flex: none; }
.tab { width: 161px; height: 32px; background: #f7f7f7; border-top-right-radius: 6px; display: flex; align-items: center; }
.tabtext { width: 139px; overflow: hidden; white-space: nowrap; font-size: 11.250px; color: #333; padding-bottom: 1px; -webkit-mask-image: linear-gradient(to right, #000 84%, transparent 96%); mask-image: linear-gradient(to right, #000 84%, transparent 96%); }
.tab .i12 { width: 11px; height: 11px; }
.newtab { width: 15px; height: 15px; margin-left: 10px; }
.wincontrols { margin-left: auto; display: flex; gap: 35px; padding-right: 17px; }
.toolbar { height: 36px; display: flex; align-items: center; flex: none; position: relative; padding-top: 2px; }
.pill { width: 280px; height: 30px; background: #fff; border-radius: 0 15px 15px 0; display: flex; align-items: center; justify-content: flex-end; padding-right: 17px; }
.readaloud { display: flex; font-family: "Liberation Sans", sans-serif; font-size: 16px; color: #666; margin-right: 22px; }
.waves { width: 6px; height: 8px; }
.tb1 { margin-left: 18px; }
.tbsep { width: 1px; height: 20px; background: #dcdcdc; margin-left: 15px; }
.tb2 { margin-left: 15px; }
.tb3 { margin-left: 26px; }
.tb4 { margin-left: 26px; }
.dlbtn { width: 40px; height: 30px; margin-left: 15px; background: #d6d6d6; border-radius: 4px 4px 0 0; display: flex; align-items: center; justify-content: center; }
.tb5 { margin-left: 16px; }
.tb6 { margin-left: 25px; }
.copilot { width: 24px; height: 26px; margin-left: 22px; }

.viewport { flex: 1; display: flex; background: #fff; margin-right: 3px; margin-bottom: 3px; border-top-right-radius: 6px; overflow: hidden; }
.page { flex: 1; position: relative; min-width: 0; display: flex; flex-direction: column; }
.pagehead { height: 44px; display: flex; align-items: center; justify-content: flex-end; padding-right: 43px; flex: none; }
.searchblue { margin-right: 17px; }
.signin { font-size: 9.500px; letter-spacing: 1px; color: #565f78; }
.support { height: 58px; text-align: right; padding-right: 54px; padding-top: 13px; font-family: Roboto, sans-serif; font-size: 16px; color: #1a2f6b; flex: none; }
.blueband { height: 91px; background: #0d3ec4; flex: none; }
.orange { width: 50px; height: 50px; border-radius: 50%; background: radial-gradient(circle at 60% 45%, #ee6a1c, #c4401a); margin: 54px 0 0 360px; flex: none; }
.lede { font-family: Roboto, sans-serif; font-size: 17.800px; color: #333; line-height: 26px; white-space: nowrap; text-align: right; padding-right: 69px; }
.lede:first-of-type { margin-top: 23px; padding-right: 69px; }
.lede.second { padding-right: 54px; }
.paleband { position: absolute; left: 0; right: 0; top: 555px; height: 52px; background: #eef2fb; }
.pagescroll { width: 16px; background: #fafafa; display: flex; flex-direction: column; align-items: center; padding-top: 10px; padding-bottom: 11px; }
.tri-up { width: 0; height: 0; border: 4.500px solid transparent; border-top: 0; border-bottom: 6px solid #8b8b8b; }
.pagethumb { width: 8px; height: 69px; border-radius: 4px; background: #8a8a8a; margin-top: 29px; }
.tri-down { width: 0; height: 0; border: 4.500px solid transparent; border-bottom: 0; border-top: 6px solid #8b8b8b; margin-top: auto; }

.dlpanel { position: absolute; left: 146px; top: 66px; width: 362px; height: 142px; background: #fff; border: 1px solid #cdd9ee; border-top-color: #e4e4e4; }
.dlhead { height: 37px; border-bottom: 1px solid #e8e8e8; display: flex; justify-content: flex-end; align-items: center; gap: 15px; padding-right: 16px; padding-top: 2px; }

/* installer */
.installer { position: absolute; left: 511px; top: 72px; width: 530px; height: 536px; background: #fff; border: 1px solid #a0a0a0; display: flex; flex-direction: column; align-items: center; font-family: "Liberation Sans", sans-serif; }
.instbar { align-self: flex-end; display: flex; gap: 33px; padding: 8px 18px 0 0; height: 63px; }
.track { width: 376px; height: 32px; display: flex; align-items: center; flex: none; }
.dot { width: 32px; height: 32px; border-radius: 50%; display: flex; align-items: center; justify-content: center; font-size: 13px; font-weight: 700; flex: none; }
.dot.filled { background: #0d3ec4; color: #fff; }
.dot.ring { background: #fff; border: 3px solid #0d3ec4; color: #0d3ec4; }
.line { flex: 1; height: 4px; background: #0d3ec4; }
.steplabels { width: 519px; display: grid; grid-template-columns: repeat(3, 1fr); text-align: center; margin-top: 3px; font-size: 15.800px; color: #666; line-height: 22px; }
.steplabels b { color: #333; }
.disc { width: 136px; height: 136px; border-radius: 50%; background: #e8e8ee; margin-top: 50px; display: flex; align-items: center; justify-content: center; flex: none; }
.discin { width: 126px; height: 126px; border-radius: 50%; background: #d0d0da; }
.copying { margin-top: 81px; font-size: 14.500px; color: #222; line-height: 18px; }

.watermark { position: absolute; left: 1038px; top: 610px; height: 62px; display: flex; align-items: center; gap: 1px; pointer-events: none; }
.wmtext { font-family: "Liberation Sans", sans-serif; font-size: 54px; color: rgba(255,255,255,.55); -webkit-text-stroke: 1.500px rgba(205,208,218,.85); display: inline-block; width: 64px; transform: scaleX(.55); transform-origin: left center; white-space: nowrap; }
.wmplay { width: 64px; height: 62px; margin-left: 2px; margin-right: 1px; }

/* explorer */
.explorer { position: absolute; left: 0; top: 0; width: 640px; height: 680px; background: #fff; border: 1px solid #9d9d9d; border-bottom: 0; display: flex; flex-direction: column; }
.titlebar { height: 30px; display: flex; align-items: center; flex: none; }
.qat1 { margin-left: 7px; }
.qsep { width: 1px; height: 13px; background: #c4c4c4; margin-left: 8px; }
.qat2 { margin-left: 11px; }
.qat3 { margin-left: 10px; }
.qat4 { width: 8px; height: 8px; margin-left: 7px; }
.qsep.second { margin-left: 8px; }
.wintitle { margin-left: 6px; color: #8f8f8f; padding-bottom: 2px; }
.expcontrols { margin-left: auto; display: flex; gap: 33px; padding-right: 17px; }
.ribbontabs { height: 24px; display: flex; align-items: stretch; position: relative; flex: none; border-bottom: 1px solid #dadbdc; }
.rtab { display: flex; align-items: center; justify-content: center; color: #333; height: 24px; padding-bottom: 2px; }
.file { width: 56px; background: #1061ae; color: #fff; }
.home { width: 57px; background: #f5f6f7; border: 1px solid #dadbdc; border-bottom: 0; }
.share { width: 60px; }
.view { width: 52px; }
.ribbonup { width: 12px; height: 8px; margin: auto 9px auto auto; }
.helpdot { width: 16px; height: 16px; border-radius: 50%; background: #0b5cad; color: #fff; font: 700 12px/16px "Liberation Sans", sans-serif; text-align: center; margin: auto 3px auto 0; }

.ribbon { height: 92px; background: #f5f6f7; border-bottom: 1px solid #dadbdc; display: flex; padding: 3px 0 1px; flex: none; }
.rgroup { display: flex; flex-direction: column; border-right: 1px solid #e2e3e4; position: relative; }
.rcontent { flex: 1; display: flex; min-height: 0; }
.rlabel { text-align: center; color: #555; height: 16px; line-height: 16px; font-size: 11.250px; }
.clip { width: 185px; }
.org { width: 161px; }
.newg { width: 87px; }
.openg { width: 101px; }
.big { display: flex; flex-direction: column; align-items: center; text-align: center; line-height: 13px; font-size: 11.200px; color: #333; padding-top: 6px; }
.big.muted { color: #767676; }
.bigicon { width: 24px; height: 30px; margin-bottom: 3px; }
.pin { width: 78px; }
.copy { width: 30px; margin-left: 0; }
.paste { width: 40px; margin-left: 7px; }
.smallcol { display: flex; flex-direction: column; align-items: center; }
.clipcol { margin-left: 8px; padding-top: 6px; gap: 7px; }
.rows { display: flex; flex-direction: column; gap: 12px; padding-top: 12px; font-size: 11.200px; color: #555; }
.rows.muted { color: #7b7b7b; }
.orgcol1 { width: 85px; padding-left: 9px; border-right: 1px solid #e2e3e4; margin-bottom: 12px; }
.orgcol2 { padding-left: 7px; }
.rowbtn { display: flex; align-items: center; gap: 5px; height: 17px; white-space: nowrap; }
.caret { width: 0; height: 0; border: 3.500px solid transparent; border-top: 4px solid #444; border-bottom: 0; }
.caret.faint { border-top-color: #b5b5b5; }
.caret.dark { border-top-color: #333; margin-top: 3px; }
.newf { width: 57px; }
.bigicon.folder { width: 20px; height: 28px; margin: 0 0 5px; }
.newcol { gap: 5px; padding-top: 5px; align-items: flex-start; }
.withcaret { display: flex; align-items: center; gap: 2px; }
.i16.med { width: 18px; height: 18px; }
.props { width: 63px; margin-left: 0; }
.bigicon.check { width: 22px; height: 28px; margin: 0 0 5px; }
.opencol { padding-top: 5px; gap: 6px; align-items: flex-start; margin-left: 3px; }
.selg { width: 42px; margin-left: 2px; height: 87px; background: #e9f1f8; border: 1px solid #c5dcf0; border-right: 1px solid #c5dcf0; align-items: center; padding-top: 4px; font-size: 11.200px; color: #333; }
.selicon { width: 30px; height: 30px; border: 1px solid #a8cfec; background: #eaf3fb; display: flex; align-items: center; justify-content: center; margin-bottom: 4px; }
.sellabel { line-height: 13px; }

.addressbar { height: 35px; display: flex; align-items: center; flex: none; position: relative; }
.navarrow { width: 14px; height: 12px; }
.navarrow.back { margin-left: 12px; }
.navarrow.fwd { margin-left: 16px; }
.navcaret { width: 8px; height: 5px; margin-left: 9px; }
.navarrow.up { width: 12px; height: 14px; margin-left: 14px; }
.addrbox { margin-left: 6px; width: 305px; height: 22px; border: 1px solid #d9d9d9; display: flex; align-items: center; padding-left: 3px; }
.crumb { width: 5px; height: 8px; margin-left: 8px; margin-right: 9px; }
.crumbtext { color: #222; padding-bottom: 2px; }
.addrcaret { width: 10px; height: 6px; margin-left: auto; margin-right: 4px; }
.refresh { width: 18px; height: 20px; border-left: 1px solid #d9d9d9; display: flex; align-items: center; justify-content: center; }
.searchbox { margin-left: 13px; width: 202px; height: 22px; border: 1px solid #d9d9d9; display: flex; align-items: center; justify-content: space-between; padding: 0 7px 2px 8px; color: #666; }

.explbody { height: 475px; display: flex; flex: none; }
.navpane { width: 156px; display: flex; flex: none; }
.navlist { width: 140px; overflow: hidden; flex: none; }
.navrow { height: 24px; display: flex; align-items: center; padding-left: 40px; gap: 5px; white-space: nowrap; color: #222; padding-bottom: 3px; }
.navrow.top { padding-left: 32px; }
.navrow.sel { background: #d9d9d9; }
.navlabel { overflow: hidden; }
.vscroll { width: 16px; background: #f0f0f0; display: flex; flex-direction: column; align-items: center; padding: 6px 0 5px; }
.sarrow { width: 9px; height: 6px; }
.vspace { height: 196px; }
.vspace.end { flex: 1; }
.vthumb { width: 16px; height: 184px; background: #cdcdcd; }
.filepane { flex: 1; min-width: 0; display: flex; flex-direction: column; padding-left: 4px; overflow: hidden; }
.colhead { height: 26px; display: flex; align-items: center; color: #4c607a; flex: none; }
.c-name { width: 271px; padding-left: 17px; height: 24px; line-height: 22px; border-right: 1px solid #e5e5e5; }
.c-date { width: 145px; padding-left: 6px; height: 24px; line-height: 22px; border-right: 1px solid #e5e5e5; position: relative; }
.sortcaret { position: absolute; left: 66px; top: 0; width: 8px; height: 4px; }
.c-type { padding-left: 5px; padding-bottom: 2px; }
.filelist { flex: 1; overflow: hidden; padding-top: 1px; }
.grouphead { height: 32px; display: flex; align-items: center; padding-left: 6px; }
.groupchev { width: 11px; height: 7px; }
.gtitle { font-size: 14.500px; color: #1e3287; margin-left: 4px; white-space: nowrap; }
.gline { flex: 1; height: 1px; background: #e2e5ea; margin-left: 7px; }
.filerow { height: 21px; display: flex; align-items: center; white-space: nowrap; color: #222; }
.ficon { margin-left: 20px; }
.fname { margin-left: 2px; width: 240px; flex: none; }
.fdate { color: #5f5f5f; width: 144px; flex: none; }
.ftype { color: #5f5f5f; flex: none; }
.hscroll { height: 16px; background: #f0f0f0; display: flex; align-items: center; flex: none; padding: 0 5px 0 4px; }
.harrow { width: 6px; height: 9px; }
.hthumb { width: 339px; height: 16px; background: #cdcdcd; margin-left: 7px; margin-right: auto; }

.statusbar { height: 24px; display: flex; align-items: center; flex: none; }
.count { margin-left: 14px; color: #333; padding-bottom: 2px; }
.viewbtn { width: 19px; height: 22px; display: flex; align-items: center; justify-content: center; }
.viewbtn.on { margin-left: auto; background: #cce8ff; border: 1px solid #99d1ff; width: 20px; }
.viewbtn:last-child { margin: 0 8px 0 3px; }
.vb { width: 16px; height: 14px; }

/* dialog */
.dialog { position: absolute; left: 439px; top: 275px; width: 407px; height: 180px; background: #fff; border: 1px solid #6b6b6b; display: flex; flex-direction: column; }
.dlgtitle { height: 22px; display: flex; align-items: center; justify-content: space-between; padding: 0 9px 0 3px; font-size: 12.500px; color: #111; flex: none; }
.dlgbody { flex: 1; display: flex; padding: 26px 0 0 21px; }
.warn { width: 32px; height: 29px; margin-top: 3px; }
.dlgtext { margin-left: 9px; font-size: 10.900px; line-height: 13px; color: #111; white-space: nowrap; }
.gap { margin-top: 13px; }
.dlgfoot { height: 42px; background: #f0f0f0; display: flex; justify-content: flex-end; gap: 7px; padding: 9px 15px 0 0; flex: none; }
.dbtn { width: 75px; height: 23px; font: 10.900px "Noto Sans", sans-serif; color: #111; padding: 0; background: #f0f0f0; border: 1px solid; border-color: #f9f9f9 #767676 #767676 #f9f9f9; }
.dbtn.default { border: 2px solid #6e6e6e; }

/* taskbar */
.taskbar { position: absolute; left: 0; top: 680px; width: 1280px; height: 40px; background: #03111f; display: flex; align-items: stretch; color: #fff; }
.startbtn { width: 48px; display: flex; align-items: center; justify-content: center; }
.tasksearch { width: 287px; background: #f0f0f0; color: #333; border-top: 1px solid #d0d0d0; display: flex; align-items: center; font-size: 14px; padding-left: 12px; gap: 10px; }
.tbtn { width: 49px; display: flex; align-items: center; justify-content: center; position: relative; }
.taskview { width: 51px; }
.tbicon { width: 26px; height: 26px; }
.under::after { content: ""; position: absolute; left: 5px; right: 4px; bottom: 0; height: 3px; background: #76b9ed; }
.ff { margin-right: 5px; }
.mb { width: 45px; }
.mbfill { position: absolute; left: 0; top: 0; bottom: 0; width: 21px; background: #2a6b36; }
.mb .tbicon { position: relative; margin-right: 5px; }
.mb::after { content: ""; position: absolute; left: 0; width: 40px; bottom: 0; height: 3px; background: #3fdc5a; }
.active { width: 48px; background: #3a4650; }
.active::after { content: ""; position: absolute; left: 0; right: 0; bottom: 0; height: 3px; background: #76b9ed; }
.tbicon.small { width: 24px; height: 20px; }
.tray { margin-left: auto; display: flex; align-items: center; position: relative; }
.trayicon { width: 14px; height: 18px; margin-right: 8px; }
.trayicon.chev { width: 12px; height: 8px; margin-right: 12px; }
.trayicon.net { width: 16px; height: 15px; margin-right: 8px; }
.trayicon.vol { width: 16px; height: 15px; margin-right: 5px; }
.clock { width: 60px; display: flex; flex-direction: column; align-items: center; font-size: 11.500px; line-height: 17px; }
.notif { width: 16px; height: 16px; margin: 0 20px 0 15px; }
.showdesk { width: 1px; height: 40px; background: #3a4650; margin-right: 4px; }
</style>
